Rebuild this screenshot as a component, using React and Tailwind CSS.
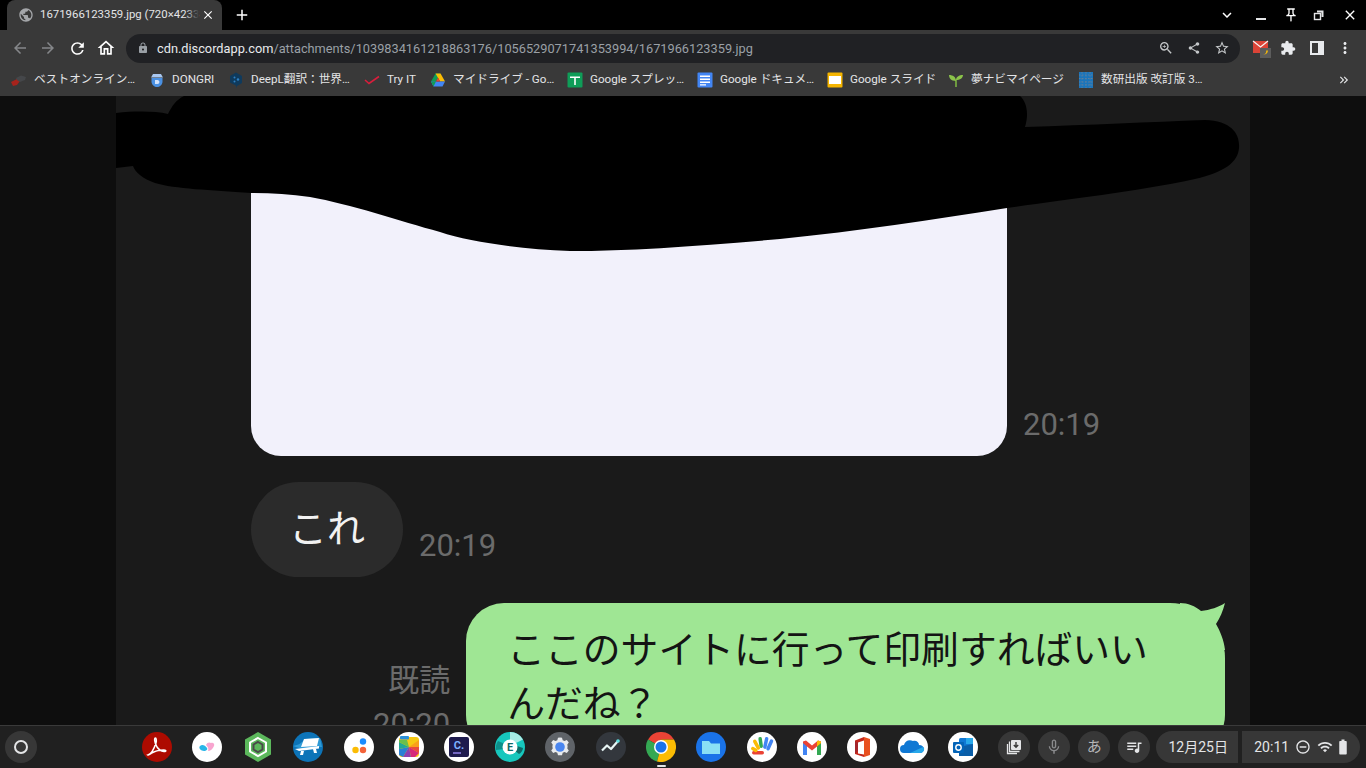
import {
  MdAdd, MdArrowBack, MdArrowForward, MdClose, MdExtension, MdKeyboardArrowDown, MdKeyboardDoubleArrowRight,
  MdLock, MdMicNone, MdMoreVert, MdOutlineDoDisturbOn, MdOutlineHome, MdOutlineStarBorder, MdPublic, MdOutlinePushPin,
  MdQueueMusic, MdRefresh, MdShare, MdWifi, MdBatteryFull, MdOutlineZoomIn,
} from 'react-icons/md';

const SANS = "font-['Roboto','Noto_Sans_CJK_JP',sans-serif]";

/* bookmark favicons */
const Drive = () => (
  <svg viewBox="0 0 16 16" className="w-4 h-4">
    <path d="M5.5 1.5h5L6 9.5H1z" fill="#0f9d58" />
    <path d="M10.5 1.5L15 9.5h-5L5.5 1.5z" fill="#fbbc04" />
    <path d="M3.5 14.5L1 9.5h14l-2.5 5z" fill="#4285f4" />
    <path d="M1 9.5h5l-2.5 5z" fill="#0f9d58" />
    <path d="M6 9.5h4l-2-4z" fill="#ea4335" />
  </svg>
);

const Sheets = () => (
  <svg viewBox="0 0 16 16" className="w-4 h-4">
    <rect x="0.5" y="0.5" width="15" height="15" rx="1" fill="#0f9d58" />
    <path d="M3 4.500h10v1.500H8.800v7H7.200V6H3z" fill="#fff" />
  </svg>
);

const Docs = () => (
  <svg viewBox="0 0 16 16" className="w-4 h-4">
    <rect x="0.5" y="0.5" width="15" height="15" rx="1" fill="#4285f4" />
    <path d="M3 3.500h10v1.600H3zM3 6.500h10v1.600H3zM3 9.500h10v1.600H3zM3 12.200h6v1.400H3z" fill="#fff" />
  </svg>
);

const Slides = () => (
  <svg viewBox="0 0 16 16" className="w-4 h-4">
    <rect x="0.5" y="0.5" width="15" height="15" rx="1" fill="#f4b400" />
    <rect x="2" y="4" width="12" height="8" fill="#fff" />
  </svg>
);

const bookmarks = [
  {
    w: 'w-[138px]', label: 'ベストオンライン…',
    icon: (
      <svg viewBox="0 0 16 16" className="w-4 h-4">
        <path d="M0 10l6-3 3 2-3 4-4 1z" fill="#a6231c" />
        <path d="M5 6l5-2.500 5 1.500-1 3-5 2-3-2z" fill="#45474a" />
      </svg>
    ),
  },
  {
    w: 'w-[79px]', label: 'DONGRI',
    icon: (
      <svg viewBox="0 0 16 16" className="w-4 h-4">
        <path d="M2.500 6h11v3.500C13.500 13 10.500 15 8 15s-5.500-2-5.500-5.500z" fill="#4a90e2" />
        <path d="M4 2h8l2 3.500H2z" fill="#a8c7f0" />
        <path d="M6 8h2.500c2.500 0 2.500 4 0 4H6z" fill="#d2e3fc" />
      </svg>
    ),
  },
  {
    w: 'w-[136px]', label: 'DeepL翻訳：世界…',
    icon: (
      <svg viewBox="0 0 16 16" className="w-4 h-4">
        <path d="M8 0.500l6 3.500v7l-5 3-1 2v-2.500L2 10.500V4z" fill="#0f3a5c" />
        <circle cx="10" cy="7.500" r="1.200" fill="#2f80c2" />
        <circle cx="6.500" cy="5.500" r="1" fill="#2f80c2" />
        <circle cx="6.500" cy="9.500" r="1" fill="#2f80c2" />
      </svg>
    ),
  },
  {
    w: 'w-[66px]', label: 'Try IT',
    icon: (
      <svg viewBox="0 0 16 16" className="w-4 h-4">
        <path d="M1 8l4 3.500L15 4.500" fill="none" stroke="#d81e3c" strokeWidth="1.600" />
      </svg>
    ),
  },
  { w: 'w-[137px]', label: 'マイドライブ - Go…', icon: <Drive /> },
  { w: 'w-[130px]', label: 'Google スプレッ…', icon: <Sheets /> },
  { w: 'w-[130px]', label: 'Google ドキュメ…', icon: <Docs /> },
  { w: 'w-[121px]', label: 'Google スライド', icon: <Slides /> },
  {
    w: 'w-[130px]', label: '夢ナビマイページ',
    icon: (
      <svg viewBox="0 0 16 16" className="w-4 h-4">
        <path d="M8 15V8" stroke="#7cb342" strokeWidth="1.600" />
        <path d="M8 9C3 9 1 6 1 3c4 0 7 2 7 6zM8 8c0-3 3-5 7-5 0 3-3 5-7 5z" fill="#8bc34a" />
      </svg>
    ),
  },
  {
    w: 'w-[240px]', label: '数研出版 改訂版 3…',
    icon: (
      <svg viewBox="0 0 16 16" className="w-4 h-4">
        <path d="M1 0h14v16H1z" fill="#1b75bb" />
        <path d="M1 3h14M1 6.500h14M1 10h14M1 13h14M4 0v16M8 0v16M12 0v16" stroke="#5c7f9c" strokeWidth="1" strokeDasharray="1.500 1.500" />
      </svg>
    ),
  },
];

/* shelf app icons, 30px circles */
const Shelf = ({ children }) => (
  <svg viewBox="0 0 30 30" className="w-[30px] h-[30px] shrink-0">{children}</svg>
);

const apps = [
  <>
    <circle cx="15" cy="15" r="15" fill="#ad0b00" />
    <path d="M6 23c3-1 6-6 8-12 .6-2 .4-5-.6-5-1.200 0-1.200 4 1.600 9 1.600 2.500 4 4 7 4.500 2.500.3 2.500-1.500 0-1.500-4 0-10 1.500-13 3.500-1.600 1-2.500 1.800-3 1.500z" fill="none" stroke="#fff" strokeWidth="1.500" />
  </>,
  <>
    <circle cx="15" cy="15" r="15" fill="#fff" />
    <path d="M8 14c2-2 5-1 7 2 1 1.600-1 3-3 3-3 0-6-3-4-5z" fill="#29b6e8" />
    <path d="M14 13c1-3 4-3 5-2 2-1 4 1 3 3-1 3-4 5-6 5 1-2 0-4-2-6z" fill="#f8a5cf" />
  </>,
  <>
    <path d="M15 0l13 7.500v15L15 30 2 22.500v-15z" fill="#5cb85c" />
    <path d="M15 6l8 4.500v9L15 24l-8-4.500v-9z" fill="none" stroke="#fff" strokeWidth="2" />
    <path d="M15 10l4.500 2.500v5L15 20l-4.500-2.500v-5z" fill="none" stroke="#4a4a4a" strokeWidth="2" />
  </>,
  <>
    <circle cx="15" cy="15" r="15" fill="#0d74b8" />
    <path d="M0 14c6-1 8-3 12-7l15-1 2 9c-8 0-16 1-20 2z" fill="#2e9ad6" />
    <path d="M11 7l15-1-2 8-16 1z" fill="#fff" />
    <path d="M2 17l24-3v2.500L6 19z" fill="#fff" />
    <path d="M8 19h3l-1 4H7zM20 17h3l1 4h-3z" fill="#fff" />
  </>,
  <>
    <circle cx="15" cy="15" r="15" fill="#fff" />
    <circle cx="19" cy="9.500" r="3.200" fill="#1a8cff" />
    <circle cx="11.500" cy="18" r="3.200" fill="#fbbc04" />
    <circle cx="19" cy="18" r="3.200" fill="#f4633a" />
  </>,
  <>
    <circle cx="15" cy="15" r="15" fill="#fff" />
    <rect x="5" y="5" width="20" height="20" rx="3" fill="#f6c913" />
    <path d="M15 15L25 8v7z" fill="#f9a01b" />
    <path d="M15 15h10v6z" fill="#ea4c3c" />
    <path d="M15 15l10 6-4 4h-4z" fill="#d6297a" />
    <path d="M15 15l2 10H9z" fill="#8e3fb0" />
    <path d="M15 15l-6 10-4-2v-6z" fill="#2a7fd5" />
    <path d="M15 15L5 17v-7z" fill="#21a896" />
    <path d="M15 15L5 10V8h8z" fill="#6abf4b" />
    <rect x="6" y="4" width="9" height="3.500" rx="1" fill="#2a8fd8" />
  </>,
  <>
    <circle cx="15" cy="15" r="15" fill="#fff" />
    <rect x="5" y="5" width="20" height="20" rx="2" fill="#1e1b4d" />
    <text x="15" y="17" textAnchor="middle" fontSize="11" fontFamily="Roboto, sans-serif" fontWeight="700" fill="#7db0ff">C.</text>
    <path d="M9 21h8" stroke="#8a7be0" strokeWidth="1.600" />
  </>,
  <>
    <circle cx="15" cy="15" r="15" fill="#17c7bd" />
    <path d="M15 0A15 15 0 0 1 28 7.500L21 11c-1-1.500-3-2-6-2z" fill="#a6ece6" />
    <path d="M24 22l-5-4 3-4 6 2c0 2-2 5-4 6z" fill="#0d6a68" />
    <path d="M3 9l7 3-1 5-8 1c-.5-3 0-6 2-9z" fill="#0e8f8a" />
    <circle cx="15" cy="15" r="7.500" fill="#fff" />
    <text x="15" y="19" textAnchor="middle" fontSize="11" fontFamily="Roboto, sans-serif" fontWeight="700" fill="#0d6a68">E</text>
  </>,
  <>
    <circle cx="15" cy="15" r="15" fill="#5f6368" />
    <path d="M15 5.500l2 .3.700 2.500 1.800.800 2.300-1.200 2 2.500-1.500 2.100.300 2-.300 2 1.500 2.100-2 2.500-2.300-1.200-1.800.800-.700 2.500h-4l-.700-2.500-1.800-.800-2.300 1.200-2-2.500 1.500-2.100-.300-2 .300-2-1.500-2.100 2-2.500 2.300 1.200 1.800-.800.700-2.500z" fill="#e8eaed" />
    <circle cx="15" cy="15" r="4.800" fill="#4a86f0" />
  </>,
  <>
    <circle cx="15" cy="15" r="15" fill="#33373d" />
    <path d="M6 18.500l5-5 4 3.500 7-8" fill="none" stroke="#e8f5f5" strokeWidth="2.200" strokeLinejoin="round" />
    <circle cx="22" cy="9" r="1.800" fill="#5fe0e0" />
  </>,
  <>
    <path d="M15 15L2 7.500A15 15 0 0 1 28 7.500H15z" fill="#ea4335" />
    <path d="M15 15L2 7.500A15 15 0 0 0 11 29.500z" fill="#34a853" />
    <path d="M15 15l-4 14.500A15 15 0 0 0 28 7.500H15z" fill="#fbbc04" />
    <circle cx="15" cy="15" r="7" fill="#fff" />
    <circle cx="15" cy="15" r="5.500" fill="#1a73e8" />
  </>,
  <>
    <circle cx="15" cy="15" r="15" fill="#1a73e8" />
    <path d="M6 9h7l2 2.500h9V22H6z" fill="#8ae0f5" />
  </>,
  <>
    <circle cx="15" cy="15" r="15" fill="#fff" />
    <rect x="12" y="5" width="3.500" height="11" rx="1.700" fill="#34a853" transform="rotate(-8 14 11)" />
    <rect x="8" y="7" width="3.500" height="11" rx="1.700" fill="#fbbc04" transform="rotate(-28 10 13)" />
    <rect x="17" y="5" width="3.500" height="12" rx="1.700" fill="#4285f4" transform="rotate(12 19 11)" />
    <rect x="21" y="7" width="3.500" height="12" rx="1.700" fill="#4285f4" transform="rotate(24 23 13)" />
    <rect x="5" y="19" width="12" height="3.500" rx="1.700" fill="#ea4335" />
    <rect x="5" y="14" width="3.500" height="7" rx="1.700" fill="#fbbc04" transform="rotate(-60 7 17)" />
  </>,
  <>
    <circle cx="15" cy="15" r="15" fill="#fff" />
    <path d="M6 23V9.500l3-1 6 5 6-5 3 1V23h-4v-8.500l-5 4-5-4V23z" fill="#ea4335" />
    <path d="M6 23h4v-8.500L6 11z" fill="#4285f4" />
    <path d="M24 23h-4v-8.500l4-3.500z" fill="#34a853" />
    <path d="M24 9.500l-3-1-1 1v5l4-3.500z" fill="#fbbc04" />
  </>,
  <>
    <circle cx="15" cy="15" r="15" fill="#fff" />
    <path d="M8 8.500L17 5v20l-9-3z" fill="#c4271b" />
    <path d="M17 5l6 2v16l-6 2z" fill="#e8501f" />
    <path d="M11 10.500l6-2v14l-6-1z" fill="#fff" />
    <path d="M8 9l3 1.500v8l-3 3z" fill="#a4262c" />
  </>,
  <>
    <circle cx="15" cy="15" r="15" fill="#fff" />
    <path d="M6 21a4 4 0 0 1 0-8c1-4 5-6 9-4 3-1 6 1 6 4 3 0 5 2 5 4s-2 4-4 4z" fill="#0f78d4" />
    <path d="M12 21l13-6c1 .6 1.500 1.500 1 3-.4 2-2 3-4 3z" fill="#28a8ea" />
  </>,
  <>
    <circle cx="15" cy="15" r="15" fill="#fff" />
    <rect x="11" y="6" width="14" height="18" rx="1.500" fill="#0f78d4" />
    <path d="M18 6h7v6h-7z" fill="#28a8ea" />
    <path d="M11 15l14-3v12H11z" fill="#0a5ea8" />
    <rect x="5" y="10" width="11" height="11" rx="1" fill="#0364b8" />
    <circle cx="10.500" cy="15.500" r="2.700" fill="none" stroke="#fff" strokeWidth="1.400" />
  </>,
];

const Pod = ({ children }) => (
  <div className="w-8 h-8 rounded-full bg-[#373737] flex items-center justify-center text-[#e4e5e7]">{children}</div>
);

function Chat() {
  return (
    <div className="w-[1134px] bg-[#1a1a1a] flex flex-col items-start overflow-hidden">
      <div className="flex items-end ml-[135px] gap-4 shrink-0">
        <div className="w-[756px] h-[360px] bg-[#f2f1fb] rounded-b-[30px]" />
        <span className="text-[31px] leading-[40px] text-[#6b6b6b] mb-[11px]">20:19</span>
      </div>
      <div className="flex items-end ml-[135px] mt-[26px] gap-4 shrink-0">
        <div className="w-[152px] h-[95px] bg-[#2b2b2b] rounded-[48px] flex items-center justify-center text-[38px] text-[#f2f2f2]">
          これ
        </div>
        <span className="text-[31px] leading-[40px] text-[#6b6b6b] mb-[11px]">20:19</span>
      </div>
      <div className="flex items-start ml-[257px] mt-[26px] gap-4 shrink-0">
        <div className="flex flex-col items-end mt-[56px] text-[#6b6b6b] text-[31px] leading-[44px]">
          <span>既読</span>
          <span>20:20</span>
        </div>
        <div className="relative w-[759px] h-[150px] bg-[#9fe694] rounded-tl-[38px] rounded-tr-[55px] rounded-b-[38px] pl-[41px] pt-[20px] text-[37.8px] leading-[54px] text-[#141414]">
          <p className="whitespace-nowrap">ここのサイトに行って印刷すればいい</p>
          <p>んだね？</p>
          <svg viewBox="0 0 45 47" className="absolute right-0 top-0 w-[45px] h-[47px]">
            <path d="M0 0C8 0 15 3 21 8C30 7 39 4 45 0C43 8 40 15 36 21C40 28 44 37 45 47L0 47Z" fill="#9fe694" />
          </svg>
        </div>
      </div>
    </div>
  );
}

export default function App() {
  return (
    <div className={`w-[1366px] h-[768px] flex flex-col overflow-hidden bg-black ${SANS}`}>
      {/* Tab strip */}
      <div className="h-[30px] shrink-0 bg-black flex items-center text-[#e4e5e7]">
        <div className="ml-[7px] w-[215px] h-[30px] bg-[#393939] rounded-t-lg flex items-center pl-[11px] pr-[7px]">
          <MdPublic className="w-[16px] h-[16px] text-[#a4a6a9] shrink-0" />
          <div className="relative ml-[6px]">
            <span className="block text-[11.4px] text-[#e4e5e7] whitespace-nowrap">1671966123359.jpg (720×4233</span>
            <span className="absolute right-0 top-0 bottom-0 w-[14px] bg-gradient-to-r from-transparent to-[#393939]" />
          </div>
          <MdClose className="ml-auto w-[14px] h-[14px] text-white shrink-0" />
        </div>
        <MdAdd className="ml-[11px] w-[18px] h-[18px] text-white" />
        <div className="ml-auto flex items-center text-white">
          <MdKeyboardArrowDown className="w-[18px] h-[18px] mr-[20px]" />
          <span className="w-[10px] h-[2px] bg-[#e4e5e7] mt-[8px] mr-[17px]" />
          <MdOutlinePushPin className="w-[16px] h-[16px] mr-[14px]" />
          <svg viewBox="0 0 12 12" className="w-[12px] h-[12px] mr-[17px]">
            <path d="M4 1.500h6.500V8H8.500V3.500H4z" fill="#e4e5e7" />
            <rect x="1.500" y="4.500" width="6" height="6" fill="none" stroke="#e4e5e7" strokeWidth="1.400" />
          </svg>
          <MdClose className="w-[16px] h-[16px] mr-[8px]" />
        </div>
      </div>

      {/* Toolbar */}
      <div className="h-[36px] shrink-0 bg-[#393939] flex items-center">
        <MdArrowBack className="ml-[11px] w-[18px] h-[18px] text-[#85878a]" />
        <MdArrowForward className="ml-[10px] w-[18px] h-[18px] text-[#85878a]" />
        <MdRefresh className="ml-[11px] w-[19px] h-[19px] text-white" />
        <MdOutlineHome className="ml-[9px] w-[20px] h-[20px] text-white" />
        <div className="ml-[10px] w-[1114px] h-[29px] bg-[#202124] rounded-full flex items-center pl-[11px] pr-[10px]">
          <MdLock className="w-[12px] h-[12px] text-[#9aa0a6]" />
          <span className="ml-[8px] pt-[1px] text-[12.77px] text-[#e8eaed] whitespace-nowrap">
            cdn.discordapp.com<span className="text-[#9aa0a6]">/attachments/1039834161218863176/1056529071741353994/1671966123359.jpg</span>
          </span>
          <div className="ml-auto flex items-center gap-[13px] text-[#c4c7c9]">
            <MdOutlineZoomIn className="w-[16px] h-[16px]" />
            <MdShare className="w-[14px] h-[14px]" />
            <MdOutlineStarBorder className="w-[16px] h-[16px]" />
          </div>
        </div>
        <div className="relative ml-[12px] w-[20px] h-[20px]">
          <svg viewBox="0 0 20 20" className="w-[20px] h-[20px]">
            <path d="M1 3h15v12H1z" fill="#db4437" />
            <path d="M1 3l7.500 6L16 3" fill="none" stroke="#f5f5f5" strokeWidth="1.200" />
            <rect x="8" y="10" width="11" height="10" fill="#5c5c5c" />
            <path d="M16 12.500c-.3 3-2.500 4.500-5 4 2 0 3.500-1.500 3.200-4z" fill="#fbbc04" />
          </svg>
        </div>
        <MdExtension className="ml-[8px] w-[16px] h-[16px] text-[#e8eaed]" />
        <span className="ml-[14px] w-[14px] h-[14px] border-2 border-[#e8eaed] border-r-[6px]" />
        <MdMoreVert className="ml-[12px] w-[18px] h-[18px] text-[#e8eaed]" />
      </div>

      {/* Bookmarks */}
      <div className="h-[30px] shrink-0 bg-[#393939] flex items-center pl-[11px] pb-[2px] relative">
        {bookmarks.map((b, i) => (
          <div key={i} className={`${b.w} shrink-0 flex items-center gap-[7px]`}>
            {b.icon}
            <span className="text-[11.65px] text-[#e4e5e7] whitespace-nowrap">{b.label}</span>
          </div>
        ))}
        <MdKeyboardDoubleArrowRight className="absolute right-[15px] top-[7px] w-[14px] h-[14px] text-[#e4e5e7]" />
      </div>

      {/* Image viewer */}
      <div className="relative flex-1 min-h-0 flex justify-center bg-[#0e0e0e] overflow-hidden">
        <Chat />
        <svg viewBox="0 0 1366 629" className="absolute left-0 top-0 w-[1366px] h-[629px]">
          <path
            d="M116 17 C135 15 155 15 168 18 C172 10 176 4 184 0 L1020 0 C1027 6 1029 18 1025 31 C1090 29 1150 26 1205 24 C1232 25 1240 38 1239 52 C1238 66 1225 76 1195 83 C1130 97 1060 104 1007 112 C930 124 860 135 780 143 C700 150 630 155 570 155 C520 153 470 146 440 136 C400 125 350 108 310 101 C290 98 270 97 251 97 C210 94 175 93 155 87 C143 83 135 76 133 70 L116 72 Z"
            fill="#000"
          />
        </svg>
      </div>

      {/* Shelf */}
      <div className="h-[43px] shrink-0 bg-[#202020] border-t border-[#3a3a3a] flex items-center relative">
        <div className="ml-[5px] w-8 h-8 rounded-full bg-[#373737] flex items-center justify-center">
          <span className="w-[14px] h-[14px] rounded-full border-2 border-[#e4e5e7]" />
        </div>
        <div className="ml-[105px] flex items-center gap-[20.4px]">
          {apps.map((a, i) => <Shelf key={i}>{a}</Shelf>)}
        </div>
        <span className="absolute left-[657px] bottom-[1px] w-[9px] h-[2px] bg-[#e4e5e7] rounded-full" />
        <div className="ml-[20px] flex items-center gap-[8px]">
          <Pod>
            <svg viewBox="0 0 18 18" className="w-[18px] h-[18px]">
              <path d="M2.500 6v9.500H12" fill="none" stroke="#e4e5e7" strokeWidth="1.300" />
              <path d="M4.500 3.500v10h10" fill="none" stroke="#e4e5e7" strokeWidth="1.300" />
              <rect x="6" y="2" width="10" height="10" rx="1" fill="#e4e5e7" />
              <path d="M11 4v5M8.800 7L11 9.300 13.200 7" fill="none" stroke="#373737" strokeWidth="1.400" />
            </svg>
          </Pod>
          <Pod><MdMicNone className="w-[18px] h-[18px] text-[#8a8b8d]" /></Pod>
          <Pod><span className="text-[15px] text-[#b5b6b8]">あ</span></Pod>
          <Pod><MdQueueMusic className="w-[18px] h-[18px]" /></Pod>
        </div>
        <div className="ml-[6px] w-[82px] h-8 bg-[#373737] rounded-l-full rounded-r-[4px] flex items-center justify-center pl-[2px] text-[14px] text-[#e4e5e7]">
          12月25日
        </div>
        <div className="ml-[4px] w-[118px] h-8 bg-[#373737] rounded-r-full rounded-l-[4px] flex items-center pl-[12px] text-[14px] text-[#e4e5e7]">
          20:11
          <MdOutlineDoDisturbOn className="ml-[6px] w-[16px] h-[16px]" />
          <MdWifi className="ml-[6px] w-[16px] h-[16px]" />
          <MdBatteryFull className="ml-[1px] w-[18px] h-[18px]" />
        </div>
      </div>
    </div>
  );
}
